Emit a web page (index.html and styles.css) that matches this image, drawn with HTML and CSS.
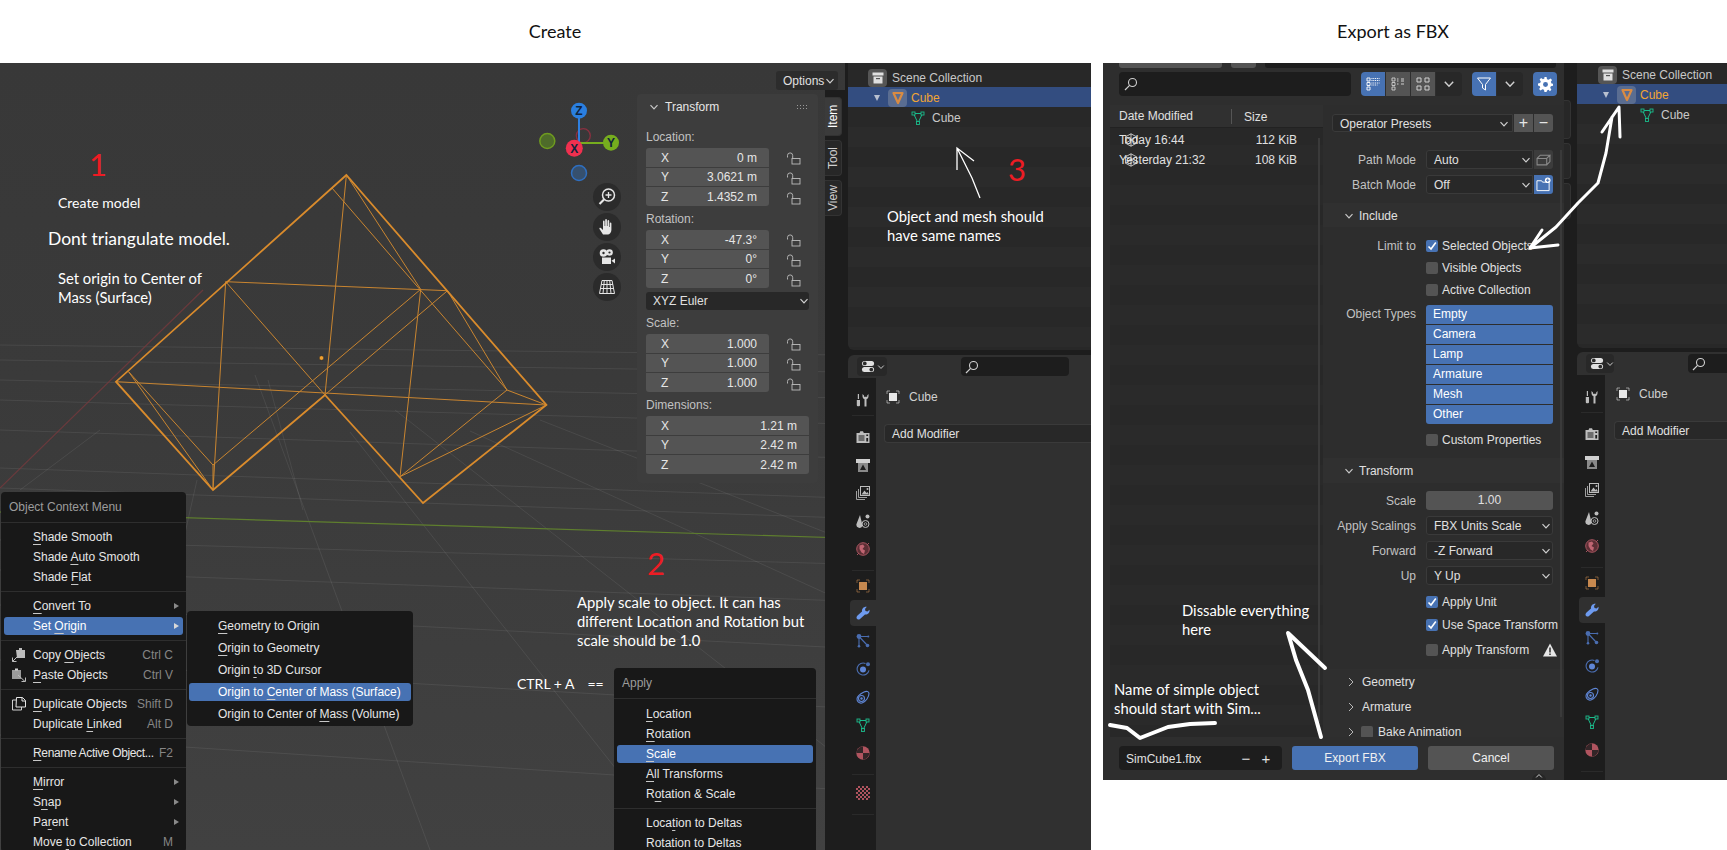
FILE: index.html
```html
<!DOCTYPE html>
<html lang="en">
<head>
  <meta charset="UTF-8" />
  <title>Create and Export as FBX</title>
  <link rel="stylesheet" href="styles.css">
</head>
<body>

  <!-- shared icons -->
  <svg class="defs" width="0" height="0">
    <defs>
      <pattern id="chk" width="4" height="4" patternUnits="userSpaceOnUse">
        <rect width="4" height="4" fill="#b0545f"/>
        <rect width="2" height="2" fill="#1d1d1d"/>
        <rect x="2" y="2" width="2" height="2" fill="#1d1d1d"/>
      </pattern>
    </defs>
    <symbol id="i-lock" viewBox="0 0 14 12">
      <path d="M.5 5V3a2.6 2.6 0 0 1 5.2 0v3" fill="none" stroke="#bdbdbd" stroke-width=".9"/>
      <rect x="5" y="6" width="8" height="5.5" fill="none" stroke="#bdbdbd" stroke-width=".9"/>
    </symbol>
    <symbol id="i-chev" viewBox="0 0 10 10">
      <path d="M1.5 3.2 5 6.8l3.5-3.6" fill="none" stroke="currentColor" stroke-width="1.2"/>
    </symbol>
    <symbol id="i-chev-r" viewBox="0 0 10 10">
      <path d="M3 1l4 4-4 4" fill="none" stroke="currentColor" stroke-width="1"/>
    </symbol>
    <symbol id="i-search" viewBox="0 0 14 14">
      <circle cx="8.5" cy="5.5" r="4" fill="none" stroke="#d0d0d0" stroke-width="1.1"/>
      <path d="M5.6 8.4 1 13" stroke="#d0d0d0" stroke-width="1.2"/>
    </symbol>
    <symbol id="i-mesh" viewBox="0 0 14 14">
      <path d="M2.5 2.5h9L7 12z" fill="none" stroke="#1abc8c" stroke-width="1"/>
      <g fill="#282828" stroke="#1abc8c" stroke-width=".9">
        <rect x="1" y="1" width="3" height="3"/><rect x="10" y="1" width="3" height="3"/><rect x="5.500" y="10.500" width="3" height="3"/>
      </g>
    </symbol>
    <symbol id="i-tri" viewBox="0 0 14 14">
      <path d="M2.500 2h9L7 12z" fill="none" stroke="#d98b42" stroke-width="2.200" stroke-linejoin="round"/>
    </symbol>
    <symbol id="i-box" viewBox="0 0 14 14">
      <path d="M1.500 1.500h11v3h-11zM2.500 5.500h9v7h-9z" fill="#e0e0e0"/>
      <rect x="5" y="7" width="4" height="1.200" fill="#555"/>
    </symbol>
    <symbol id="i-editor" viewBox="0 0 16 14">
      <rect x="1" y="1" width="13" height="5.500" rx="2.700" fill="#e0e0e0"/>
      <rect x="1" y="7.500" width="13" height="5.500" rx="2.700" fill="#e0e0e0"/>
      <circle cx="4" cy="3.700" r="2" fill="#2a2a2a"/><circle cx="11" cy="10.300" r="2" fill="#2a2a2a"/>
    </symbol>
    <symbol id="i-object" viewBox="0 0 14 14">
      <path d="M1 4V1h3M10 1h3v3M13 10v3h-3M4 13H1v-3" fill="none" stroke="currentColor" stroke-width=".8" opacity=".7"/>
      <rect x="3" y="3" width="8" height="8" fill="currentColor"/>
    </symbol>
    <symbol id="t-tool" viewBox="0 0 14 14">
      <path d="M1.800 1h1.200v5H1.800zM.8 7h3.200v5.200a1 1 0 0 1-1 1h-1.200a1 1 0 0 1-1-1z" fill="#bdbdbd"/>
      <path d="M6.500 1v2.500a3 3 0 0 0 2 2.800V13.500h2V6.300a3 3 0 0 0 2-2.800V1l-1.300 1.500v1.300H8V2.500z" fill="#bdbdbd"/>
    </symbol>
    <symbol id="t-render" viewBox="0 0 14 14">
      <path d="M.5 3h3l.8-1.700h2.700L7.800 3h5.700v10H.5z" fill="#bdbdbd"/>
      <path d="M2.500 6h6M2.500 8h6M2.500 10h6" stroke="#1d1d1d"/>
      <rect x="10.300" y="4.500" width="1.800" height="1.500" fill="#1d1d1d"/>
      <rect x="10.300" y="8" width="1.800" height="3.500" fill="#1d1d1d"/>
    </symbol>
    <symbol id="t-output" viewBox="0 0 14 14">
      <path d="M0 1h14v4H0z" fill="#d0d0d0"/>
      <path d="M2 5h10v9H2z" fill="#8a8a8a"/>
      <path d="M7 6.500 10 12H4z" fill="#1d1d1d"/>
    </symbol>
    <symbol id="t-layer" viewBox="0 0 14 14">
      <path d="M.5 5v8.500h8.500" fill="none" stroke="#a0a0a0"/>
      <path d="M2.500 3v8.500h8.500" fill="none" stroke="#a0a0a0"/>
      <rect x="4.500" y=".5" width="9" height="9" fill="#1d1d1d" stroke="#bdbdbd"/>
      <path d="M5.500 8.500l3-4 2 2.500 1-1 1.500 2.500z" fill="#bdbdbd"/><circle cx="11.500" cy="3" r="1" fill="#bdbdbd"/>
    </symbol>
    <symbol id="t-scene" viewBox="0 0 14 14">
      <path d="M4 1 .5 10a3 3 0 0 0 6 1.500z" fill="#bdbdbd"/>
      <circle cx="11.500" cy="2.500" r="2" fill="#bdbdbd"/>
      <circle cx="9.500" cy="10" r="3.500" fill="#1d1d1d" stroke="#bdbdbd"/>
      <circle cx="9.500" cy="10" r="1.300" fill="none" stroke="#bdbdbd" stroke-width=".7"/>
    </symbol>
    <symbol id="t-world" viewBox="0 0 14 14">
      <circle cx="7" cy="7" r="6.300" fill="#5c2f35" stroke="#a85560"/>
      <path d="M3.500 3.500 7 2.500l1.500 2L6.500 7 9 8.500 8 12 5.500 10.500 3.500 7z" fill="#c06572"/>
      <path d="M1 13 3 11M11 3l2-2" stroke="#a85560"/>
    </symbol>
    <symbol id="t-wrench" viewBox="0 0 14 14">
      <path d="M1.500 13.200c-1.500-1-1.200-2.700 0-3.800L6 5.500C5.600 3 7.500.5 10.800.8L9 3l.5 2 2 .5L13.500 3.800c.5 3-1.800 5-4.500 4.700L4 13c-.8.700-1.700.8-2.500.2z" fill="#6e9bf0"/>
    </symbol>
    <symbol id="t-part" viewBox="0 0 14 14">
      <path d="M3 2.500 12 2.500M3 2.500 11.500 11.500M3 2.500 3 12" stroke="#4a6db0" stroke-width="1.100"/>
      <circle cx="3" cy="2.500" r="2.400" fill="#4a6db0"/><circle cx="11.500" cy="11.500" r="1.800" fill="#4a6db0"/><circle cx="3" cy="12.300" r="1.300" fill="#4a6db0"/><circle cx="12.300" cy="2.500" r="1" fill="#4a6db0"/>
    </symbol>
    <symbol id="t-phys" viewBox="0 0 14 14">
      <path d="M9.500 1.500a6 6 0 1 0 3.500 6.800" fill="none" stroke="#4a6db0" stroke-width="1.100"/>
      <circle cx="7" cy="7.500" r="3" fill="#5f86d6"/><circle cx="12" cy="2.300" r="2" fill="#4a6db0"/>
    </symbol>
    <symbol id="t-constr" viewBox="0 0 14 14">
      <path d="M1 9c0-2.500 4-5.500 7-7 2.500-1.300 5-.5 5 1.500 0 3-3 8.500-7 9.500-3 .7-5-1.500-5-4z" fill="none" stroke="#5f86d6" stroke-width="1.100"/>
      <circle cx="5.500" cy="8.500" r="3" fill="none" stroke="#5f86d6" stroke-width="1.100"/>
      <circle cx="5.500" cy="8.500" r="1.200" fill="#5f86d6"/>
    </symbol>
    <symbol id="t-mat" viewBox="0 0 14 14">
      <circle cx="7" cy="7" r="6.700" fill="#b0545f"/>
      <path d="M7 .5V7H.5A6.500 6.500 0 0 1 7 .5zM7 7h6.500A6.500 6.500 0 0 1 7 13.500z" fill="#1d1d1d" opacity=".85"/>
    </symbol>
    <symbol id="t-tex" viewBox="0 0 14 14">
      <rect width="14" height="14" fill="url(#chk)"/>
    </symbol>
    <symbol id="i-wirecube" viewBox="0 0 14 14">
      <path d="M7 .8 12.500 3.800V10.200L7 13.200 1.500 10.200V3.800zM1.500 3.800 7 7 12.500 3.800M7 .8V13.200M1.500 10.200 7 7 12.500 10.200" fill="none" stroke="#e6e6e6" stroke-width=".8"/>
    </symbol>
    <symbol id="i-check" viewBox="0 0 12 12">
      <path d="M2.500 6.500 5 9l4.800-6.500" fill="none" stroke="#fff" stroke-width="1.600"/>
    </symbol>
  </svg>

  <div class="titles">
    <div class="title title-left">Create</div>
    <div class="title title-right">Export as FBX</div>
  </div>

  <div class="panels">

    <!-- left screenshot -->
    <section class="panel-left">
      <div class="viewport">
        <svg class="floor" viewBox="0 63 845 787">
          <g stroke="#fff" stroke-opacity=".075" stroke-width="1" fill="none">
            <path d="M0 345 845 355M0 360 845 372M0 380 845 398M0 400 845 424M0 430 845 458M0 468 845 498M0 488 845 518M0 540 845 564M0 570 845 601M0 605 845 648M0 660 845 708M0 735 845 790"/>
            <path d="M395 410 845 762M350 432 680 850M255 375 430 850M470 431 845 602M197 480 170 600M268 380 303 510M540 420 845 540M100 430 20 490"/>
          </g>
          <path d="M0 488 203 290" stroke="#7a3a3e" stroke-opacity=".75" stroke-width="1.200"/>
          <path d="M0 512 845 538" stroke="#5f7f2e" stroke-width="1.200"/>

          <!-- wire of the model -->
          <g stroke="#c98530" stroke-width="1" fill="none">
            <path d="M225.700 281.700 447.500 290.700M116 381.700 546.400 405M346.400 175 325 395M225.700 281.700 213 490M420.700 289.300 400 476.700"/>
            <path d="M225.700 281.700 325 395M447.500 290.700 213 490M420.700 289.300 213 465M332 188 507 390M346.400 175 420.700 289.300"/>
            <path d="M447.500 290.700 507 390 546.400 405M507 390 400 476.700 546.400 405M128.600 371.700 213 465M128.600 371.700 213 490M213 465 213 490"/>
          </g>
          <path d="M346.400 175 116 381.700 213 490 325 395 423 503 546.400 405z" fill="none" stroke="#d98b2c" stroke-width="1.800"/>
          <circle cx="321.500" cy="358" r="2.300" fill="#f0a030" stroke="#222" stroke-width=".5"/>

          <!-- axis gizmo -->
          <circle cx="547.300" cy="141" r="7.500" fill="#4e6b2a" stroke="#6f9b1f" stroke-width="1.500"/>
          <circle cx="579" cy="173" r="7.500" fill="#36506e" stroke="#2f6fc0" stroke-width="1.500"/>
          <circle cx="583.300" cy="135.700" r="7" fill="none" stroke="#8a3040" stroke-width="1.300"/>
          <path d="M579 111V148" stroke="#2f80e0" stroke-width="2"/>
          <path d="M575 143H611" stroke="#76ad1e" stroke-width="2"/>
          <circle cx="579" cy="110.700" r="8" fill="#2a7fe0"/>
          <circle cx="611" cy="142.700" r="8" fill="#76ad1e"/>
          <circle cx="574.300" cy="148.300" r="8.500" fill="#f0304f"/>
          <g class="axis-text">
            <text x="579" y="115">Z</text>
            <text x="611" y="147">Y</text>
            <text x="574.300" y="152.500">X</text>
          </g>
        </svg>

        <div class="options-btn">Options <svg class="chev"><use href="#i-chev"/></svg></div>

        <div class="nav-btns">
          <div class="nav-btn">
            <svg viewBox="0 0 18 18"><circle cx="10.500" cy="7" r="6" fill="none" stroke="#e6e6e6" stroke-width="1.500"/><path d="M6 11.500 1.500 16" stroke="#e6e6e6" stroke-width="2.200"/><path d="M7.500 7h6M10.500 4v6" stroke="#e6e6e6" stroke-width="1.300"/></svg>
          </div>
          <div class="nav-btn">
            <svg viewBox="0 0 18 18"><path d="M5 16.500 1.500 11c-.6-1 .6-1.800 1.400-1L5 12V3.500c0-1.300 1.600-1.300 1.600 0V8h.6V2c0-1.300 1.700-1.300 1.700 0V8h.6V3c0-1.300 1.700-1.300 1.700 0V9h.6V5.500c0-1.300 1.600-1.300 1.600 0V12c0 2.500-2 4.500-3.500 4.500z" fill="#e6e6e6"/></svg>
          </div>
          <div class="nav-btn">
            <svg viewBox="0 0 18 18"><circle cx="5.500" cy="5" r="3.800" fill="#e6e6e6"/><circle cx="11.500" cy="4.500" r="3.300" fill="#e6e6e6"/><circle cx="5.500" cy="5" r="1.200" fill="#2a2a2a"/><circle cx="11.500" cy="4.500" r="1.100" fill="#2a2a2a"/><rect x="4" y="9.500" width="9" height="6.500" fill="#e6e6e6"/><path d="M13.500 12.700 17 10.500v5z" fill="#e6e6e6"/></svg>
          </div>
          <div class="nav-btn">
            <svg viewBox="0 0 18 18"><path d="M4 2.500h10l2.500 13h-15zM9 2.500v13M6.300 2.500 5 15.500M11.700 2.500 13 15.500M3.200 6.500h11.600M2.500 10.500h13" fill="none" stroke="#e6e6e6" stroke-width="1"/></svg>
          </div>
        </div>

        <div class="tab-column">
          <div class="side-tab side-tab-on">Item</div>
          <div class="side-tab">Tool</div>
          <div class="side-tab">View</div>
        </div>

        <div class="n-panel">
          <div class="n-head">
            <svg class="n-chev"><use href="#i-chev"/></svg>
            <span>Transform</span>
            <span class="grip"></span>
          </div>

          <div class="n-label n-first">Location:</div>
          <div class="lock-row">
            <div class="num-stack">
              <div class="num"><span>X</span><span>0 m</span></div>
              <div class="num"><span>Y</span><span>3.0621 m</span></div>
              <div class="num"><span>Z</span><span>1.4352 m</span></div>
            </div>
            <div class="locks"><svg><use href="#i-lock"/></svg><svg><use href="#i-lock"/></svg><svg><use href="#i-lock"/></svg></div>
          </div>

          <div class="n-label">Rotation:</div>
          <div class="lock-row">
            <div class="num-stack">
              <div class="num"><span>X</span><span>-47.3°</span></div>
              <div class="num"><span>Y</span><span>0°</span></div>
              <div class="num"><span>Z</span><span>0°</span></div>
            </div>
            <div class="locks"><svg><use href="#i-lock"/></svg><svg><use href="#i-lock"/></svg><svg><use href="#i-lock"/></svg></div>
          </div>

          <div class="euler">XYZ Euler <svg class="chev"><use href="#i-chev"/></svg></div>

          <div class="n-label">Scale:</div>
          <div class="lock-row">
            <div class="num-stack">
              <div class="num"><span>X</span><span>1.000</span></div>
              <div class="num"><span>Y</span><span>1.000</span></div>
              <div class="num"><span>Z</span><span>1.000</span></div>
            </div>
            <div class="locks"><svg><use href="#i-lock"/></svg><svg><use href="#i-lock"/></svg><svg><use href="#i-lock"/></svg></div>
          </div>

          <div class="n-label">Dimensions:</div>
          <div class="num-stack">
            <div class="num"><span>X</span><span>1.21 m</span></div>
            <div class="num"><span>Y</span><span>2.42 m</span></div>
            <div class="num"><span>Z</span><span>2.42 m</span></div>
          </div>
        </div>

        <!-- right click menus -->
        <div class="menu menu-object">
          <div class="menu-title">Object Context Menu</div>
          <div class="menu-list">
            <div class="item"><span><u>S</u>hade Smooth</span></div>
            <div class="item"><span>Shade <u>A</u>uto Smooth</span></div>
            <div class="item"><span>Shade <u>F</u>lat</span></div>
            <div class="sep"></div>
            <div class="item"><span><u>C</u>onvert To</span><i class="arrow"></i></div>
            <div class="item hot"><span>Set <u>O</u>rigin</span><i class="arrow"></i></div>
            <div class="sep"></div>
            <div class="item">
              <svg class="item-ico" viewBox="0 0 14 14"><path d="M4 2h9v8H5z" fill="#bdbdbd"/><path d="M7 0h3v2H7z" fill="#bdbdbd"/><path d="M.5 13.500 5 9M.5 9.500v4h4" fill="none" stroke="#bdbdbd"/></svg>
              <span>Copy <u>O</u>bjects</span><span class="key">Ctrl C</span>
            </div>
            <div class="item">
              <svg class="item-ico" viewBox="0 0 14 14"><path d="M0 2h9v9H0z" fill="#9a9a9a"/><path d="M3 .5h3v2H3z" fill="#d0d0d0"/><path d="M6 7l7 6.500M13.500 9.500v4h-4" fill="none" stroke="#bdbdbd"/></svg>
              <span><u>P</u>aste Objects</span><span class="key">Ctrl V</span>
            </div>
            <div class="sep"></div>
            <div class="item">
              <svg class="item-ico" viewBox="0 0 14 14"><path d="M4 3H.5v10h9v-3" fill="none" stroke="#d0d0d0"/><path d="M4.500.5h6l3 3v6.500h-9.500zM10 .5v3.500h3.500" fill="none" stroke="#e6e6e6"/></svg>
              <span><u>D</u>uplicate Objects</span><span class="key">Shift D</span>
            </div>
            <div class="item"><span>Duplicate <u>L</u>inked</span><span class="key">Alt D</span></div>
            <div class="sep"></div>
            <div class="item"><span class="tight"><u>R</u>ename Active Object...</span><span class="key">F2</span></div>
            <div class="sep"></div>
            <div class="item"><span><u>M</u>irror</span><i class="arrow"></i></div>
            <div class="item"><span>S<u>n</u>ap</span><i class="arrow"></i></div>
            <div class="item"><span>Pa<u>r</u>ent</span><i class="arrow"></i></div>
            <div class="item"><span>Move <u>t</u>o Collection</span><span class="key">M</span></div>
          </div>
        </div>

        <div class="menu menu-sub">
          <div class="menu-list">
            <div class="item"><span><u>G</u>eometry to Origin</span></div>
            <div class="item"><span><u>O</u>rigin to Geometry</span></div>
            <div class="item"><span>Origin <u>t</u>o 3D Cursor</span></div>
            <div class="item hot"><span>Origin to <u>C</u>enter of Mass (Surface)</span></div>
            <div class="item"><span>Origin to Center of <u>M</u>ass (Volume)</span></div>
          </div>
        </div>

        <div class="menu menu-apply">
          <div class="menu-title">Apply</div>
          <div class="menu-list">
            <div class="item"><span><u>L</u>ocation</span></div>
            <div class="item"><span><u>R</u>otation</span></div>
            <div class="item hot"><span><u>S</u>cale</span></div>
            <div class="item"><span><u>A</u>ll Transforms</span></div>
            <div class="item"><span>R<u>o</u>tation &amp; Scale</span></div>
            <div class="sep"></div>
            <div class="item"><span>Loca<u>t</u>ion to Deltas</span></div>
            <div class="item"><span>Rotat<u>i</u>on to Deltas</span></div>
          </div>
        </div>
      </div>

      <div class="side-col">
        <div class="outliner">
          <div class="ol-row ol-scene"><span class="ol-ico"><svg><use href="#i-box"/></svg></span>Scene Collection</div>
          <div class="ol-row ol-object"><i class="twist"></i><span class="ol-ico ol-ico-obj"><svg><use href="#i-tri"/></svg></span>Cube</div>
          <div class="ol-row ol-mesh"><svg class="mesh-ico"><use href="#i-mesh"/></svg>Cube</div>
        </div>
        <div class="props">
          <div class="props-head">
            <div class="editor-btn"><svg><use href="#i-editor"/></svg><svg class="chev"><use href="#i-chev"/></svg></div>
            <div class="search-box"><svg><use href="#i-search"/></svg></div>
          </div>
          <div class="props-body">
            <div class="tabs">
              <svg class="tab-ico tab-first"><use href="#t-tool"/></svg>
              <div class="tab-sep"></div>
              <svg class="tab-ico"><use href="#t-render"/></svg>
              <svg class="tab-ico"><use href="#t-output"/></svg>
              <svg class="tab-ico"><use href="#t-layer"/></svg>
              <svg class="tab-ico"><use href="#t-scene"/></svg>
              <svg class="tab-ico"><use href="#t-world"/></svg>
              <div class="tab-sep"></div>
              <svg class="tab-ico tab-orange"><use href="#i-object"/></svg>
              <div class="tab-on"><svg class="tab-ico"><use href="#t-wrench"/></svg></div>
              <svg class="tab-ico"><use href="#t-part"/></svg>
              <svg class="tab-ico"><use href="#t-phys"/></svg>
              <svg class="tab-ico"><use href="#t-constr"/></svg>
              <svg class="tab-ico"><use href="#i-mesh"/></svg>
              <svg class="tab-ico"><use href="#t-mat"/></svg>
              <div class="tab-sep"></div>
              <svg class="tab-ico"><use href="#t-tex"/></svg>
              <div class="tab-sep"></div>
            </div>
            <div class="props-main">
              <div class="props-obj"><svg><use href="#i-object"/></svg>Cube</div>
              <div class="add-mod">Add Modifier</div>
            </div>
          </div>
        </div>
      </div>

      <svg class="overlay" viewBox="0 63 1091 787">
        <path d="M980 198 972 178 957 148M957 170V148L974 161" fill="none" stroke="#fff" stroke-width="1.300"/>
      </svg>

      <div class="num-note note-1">1</div>
      <div class="note note-create">Create model</div>
      <div class="note note-big note-tri">Dont triangulate model.</div>
      <div class="note note-wide note-origin">Set origin to Center of<br>Mass (Surface)</div>
      <div class="num-note note-2">2</div>
      <div class="note note-wide note-scale">Apply scale to object. It can has<br>different Location and Rotation but<br>scale should be 1.0</div>
      <div class="note note-ctrl"><span>CTRL + A</span><span>==</span></div>
      <div class="num-note note-3">3</div>
      <div class="note note-wide note-names">Object and mesh should<br>have same names</div>
    </section>

    <!-- right screenshot -->
    <section class="panel-right">
      <div class="browser">
        <div class="fb-strip"><span class="strip-a"></span><span class="strip-b"></span><span class="strip-c"></span></div>
        <div class="fb-tools">
          <div class="search-box fb-search"><svg><use href="#i-search"/></svg></div>
          <div class="btn-group">
            <div class="tbtn tbtn-on"><svg viewBox="0 0 14 14"><path d="M1 1h3v3H1zM1 5.500h3v3H1zM1 10h3v3H1z" fill="none" stroke="#fff" stroke-width=".9"/><path d="M5.500 1.500h8M5.500 3.500h8M5.500 6h8M5.500 8h6" stroke="#fff" stroke-dasharray="1 .8"/></svg></div>
            <div class="tbtn tbtn-gray"><svg viewBox="0 0 14 14"><path d="M1 1h3v3H1zM1 5.500h3v3H1zM1 10h3v3H1z" fill="none" stroke="#d0d0d0" stroke-width=".9"/><path d="M6 2h1.500M6 4h1.500M10 2h3M10 4h3M6 7h1.500M10 7h3" stroke="#d0d0d0"/></svg></div>
            <div class="tbtn tbtn-gray"><svg viewBox="0 0 14 14"><path d="M1 1h4v4H1zM9 1h4v4H9zM1 9h4v4H1zM9 9h4v4H9z" fill="none" stroke="#d0d0d0"/></svg></div>
            <div class="tbtn tbtn-drop"><svg class="chev"><use href="#i-chev"/></svg></div>
          </div>
          <div class="btn-group">
            <div class="tbtn tbtn-on"><svg viewBox="0 0 14 14"><path d="M.5 1h13L8.500 7.500V13L5.500 11V7.500z" fill="none" stroke="#fff"/></svg></div>
            <div class="tbtn tbtn-drop"><svg class="chev"><use href="#i-chev"/></svg></div>
          </div>
          <div class="tbtn tbtn-on tbtn-solo"><svg viewBox="0 0 14 14"><path d="M6 0h2l.4 2 1.500.6L11.700 1.500l1.400 1.400L12 4.500l.6 1.500 1.400.2v2l-2 .4-.6 1.500 1.100 1.700-1.400 1.400L9.900 12l-1.500.6L8 14H6l-.4-2-1.500-.6-1.700 1.100-1.400-1.400L2.100 9.900 1.500 8.400 0 8V6l2-.4.6-1.500L1.500 2.400l1.400-1.400L4.600 2.100 6 1.500z" fill="#fff"/><circle cx="7" cy="7" r="2.300" fill="#4772b3"/></svg></div>
        </div>

        <div class="fb-main">
          <div class="file-list">
            <div class="file-head"><span class="col-date">Date Modified</span><span class="col-size">Size</span></div>
            <div class="file-row"><svg class="file-ico"><use href="#i-wirecube"/></svg><span>Today 16:44</span><span class="file-size">112 KiB</span></div>
            <div class="file-row"><svg class="file-ico"><use href="#i-wirecube"/></svg><span>Yesterday 21:32</span><span class="file-size">108 KiB</span></div>
            <div class="list-scroll"></div>
          </div>

          <div class="fb-options">
            <div class="preset-row">
              <div class="preset">Operator Presets <svg class="chev"><use href="#i-chev"/></svg></div>
              <div class="pm">+</div>
              <div class="pm">−</div>
            </div>

            <div class="opt opt-path">
              <div class="opt-label">Path Mode</div>
              <div class="drop-wrap">
                <div class="drop drop-join">Auto <svg class="chev"><use href="#i-chev"/></svg></div>
                <div class="drop-btn"><svg viewBox="0 0 14 14"><path d="M1 6h9v6H1zM1 6l3-3h9l-3 3M13 3v6l-3 3" fill="none" stroke="#8a8a8a"/></svg></div>
              </div>
            </div>
            <div class="opt">
              <div class="opt-label">Batch Mode</div>
              <div class="drop-wrap">
                <div class="drop drop-join">Off <svg class="chev"><use href="#i-chev"/></svg></div>
                <div class="drop-btn drop-btn-on"><svg viewBox="0 0 16 16"><path d="M1 4h5l1 1.500h7v9H1z" fill="none" stroke="#fff"/><circle cx="12.500" cy="3.500" r="3" fill="#fff"/><path d="M12.500 1.700v3.600M10.700 3.500h3.600" stroke="#4772b3"/></svg></div>
              </div>
            </div>

            <div class="sub-head sub-include"><svg class="n-chev"><use href="#i-chev"/></svg>Include</div>

            <div class="chk-row chk-limit"><div class="opt-label">Limit to</div><span class="box box-on"><svg><use href="#i-check"/></svg></span>Selected Objects</div>
            <div class="chk-row"><div class="opt-label"></div><span class="box"></span>Visible Objects</div>
            <div class="chk-row"><div class="opt-label"></div><span class="box"></span>Active Collection</div>

            <div class="opt opt-types">
              <div class="opt-label">Object Types</div>
              <div class="type-stack">
                <div class="type">Empty</div>
                <div class="type">Camera</div>
                <div class="type">Lamp</div>
                <div class="type">Armature</div>
                <div class="type">Mesh</div>
                <div class="type">Other</div>
              </div>
            </div>
            <div class="chk-row chk-custom"><div class="opt-label"></div><span class="box"></span>Custom Properties</div>

            <div class="sub-head sub-transform"><svg class="n-chev"><use href="#i-chev"/></svg>Transform</div>
            <div class="opt opt-scale">
              <div class="opt-label">Scale</div>
              <div class="scale-val">1.00</div>
            </div>
            <div class="opt"><div class="opt-label">Apply Scalings</div><div class="drop">FBX Units Scale <svg class="chev"><use href="#i-chev"/></svg></div></div>
            <div class="opt"><div class="opt-label">Forward</div><div class="drop">-Z Forward <svg class="chev"><use href="#i-chev"/></svg></div></div>
            <div class="opt"><div class="opt-label">Up</div><div class="drop">Y Up <svg class="chev"><use href="#i-chev"/></svg></div></div>
            <div class="chk-row chk-unit"><div class="opt-label"></div><span class="box box-on"><svg><use href="#i-check"/></svg></span>Apply Unit</div>
            <div class="chk-row chk-wide"><div class="opt-label"></div><span class="box box-on"><svg><use href="#i-check"/></svg></span>Use Space Transform</div>
            <div class="chk-row chk-wide"><div class="opt-label"></div><span class="box"></span>Apply Transform
              <svg class="warn" viewBox="0 0 14 14"><path d="M7 .5 14 13.500H0z" fill="#e6e6e6"/><path d="M7 4.500v5M7 10.500v1.500" stroke="#2d2d2d" stroke-width="1.500"/></svg>
            </div>

            <div class="sub-head sub-closed"><svg class="r-chev"><use href="#i-chev-r"/></svg>Geometry</div>
            <div class="sub-head sub-closed"><svg class="r-chev"><use href="#i-chev-r"/></svg>Armature</div>
            <div class="sub-head sub-closed"><svg class="r-chev"><use href="#i-chev-r"/></svg><span class="box box-bake"></span>Bake Animation</div>
            <div class="opt-scroll"></div>
          </div>
        </div>

        <div class="fb-bottom">
          <div class="file-name"><span>SimCube1.fbx</span><span class="fn-pm">−</span><span class="fn-pm">+</span></div>
          <div class="act act-go">Export FBX</div>
          <div class="act act-no">Cancel</div>
          <div class="bump"><svg class="chev"><use href="#i-chev"/></svg></div>
        </div>
      </div>

      <div class="gutter">
        <i class="stub stub-a"></i><i class="stub stub-b"></i><i class="stub stub-c"></i>
      </div>

      <div class="side-col side-col-r">
        <div class="outliner outliner-r">
          <div class="ol-row ol-scene"><span class="ol-ico"><svg><use href="#i-box"/></svg></span>Scene Collection</div>
          <div class="ol-row ol-object"><i class="twist"></i><span class="ol-ico ol-ico-obj"><svg><use href="#i-tri"/></svg></span>Cube</div>
          <div class="ol-row ol-mesh"><svg class="mesh-ico"><use href="#i-mesh"/></svg>Cube</div>
        </div>
        <div class="props">
          <div class="props-head">
            <div class="editor-btn"><svg><use href="#i-editor"/></svg><svg class="chev"><use href="#i-chev"/></svg></div>
            <div class="search-box"><svg><use href="#i-search"/></svg></div>
          </div>
          <div class="props-body">
            <div class="tabs">
              <svg class="tab-ico tab-first"><use href="#t-tool"/></svg>
              <div class="tab-sep"></div>
              <svg class="tab-ico"><use href="#t-render"/></svg>
              <svg class="tab-ico"><use href="#t-output"/></svg>
              <svg class="tab-ico"><use href="#t-layer"/></svg>
              <svg class="tab-ico"><use href="#t-scene"/></svg>
              <svg class="tab-ico"><use href="#t-world"/></svg>
              <div class="tab-sep"></div>
              <svg class="tab-ico tab-orange"><use href="#i-object"/></svg>
              <div class="tab-on"><svg class="tab-ico"><use href="#t-wrench"/></svg></div>
              <svg class="tab-ico"><use href="#t-part"/></svg>
              <svg class="tab-ico"><use href="#t-phys"/></svg>
              <svg class="tab-ico"><use href="#t-constr"/></svg>
              <svg class="tab-ico"><use href="#i-mesh"/></svg>
              <svg class="tab-ico"><use href="#t-mat"/></svg>
              <div class="tab-sep"></div>
              <svg class="tab-ico"><use href="#t-tex"/></svg>
            </div>
            <div class="props-main">
              <div class="props-obj"><svg><use href="#i-object"/></svg>Cube</div>
              <div class="add-mod">Add Modifier</div>
            </div>
          </div>
        </div>
      </div>

      <svg class="overlay" viewBox="1103 63 624 717">
        <g fill="none" stroke="#fff" stroke-linejoin="round" stroke-linecap="round">
          <path d="M1602 132 1619 107 1620 137M1612 117 1606 153 1598 183 1578 203 1556 227 1530 248M1542 230 1530 248 1558 245" stroke-width="3"/>
          <path d="M1321 737 1308 690 1296 660 1288 633 1325 668" stroke-width="4"/>
          <path d="M1110 725 1127 728 1140 738 1168 727 1190 724 1215 723" stroke-width="4"/>
        </g>
      </svg>

      <div class="note note-wide note-dissable">Dissable everything<br>here</div>
      <div class="note note-wide note-sim">Name of simple object<br>should start with Sim...</div>
    </section>
  </div>

</body>
</html>
```
FILE: styles.css
```css
* { box-sizing: border-box; }

body {
  margin: 0;
  width: 1727px;
  height: 850px;
  overflow: hidden;
  background: white;
  font-family: "Liberation Sans", sans-serif;
  font-size: 12px;
  color: #e0e0e0;
}

.defs { position: absolute; }
svg { display: block; }

u {
  text-decoration-color: #c8c8c8;
  text-decoration-thickness: 1px;
  text-underline-offset: 3px;
}

.chev { width: 10px; height: 10px; flex: none; color: #d0d0d0; }

/* titles */
.titles {
  display: flex;
  height: 63px;
  align-items: center;
  font-family: Lato, sans-serif;
  font-size: 18px;
  color: #111;
  padding-bottom: 1px;
}

.title { text-align: center; }
.title-left { width: 1110px; }
.title-right { width: 566px; }

.panels { display: flex; }

/* left screenshot */
.panel-left {
  position: relative;
  display: flex;
  width: 1091px;
  height: 787px;
  margin-right: 12px;
  background: #1d1d1d;
}

.viewport {
  position: relative;
  width: 845px;
  margin-right: 3px;
  overflow: hidden;
  background: linear-gradient(#383838, #3a3a3a 40%, #414141);
}

.floor {
  position: absolute;
  inset: 0;
  width: 845px;
  height: 787px;
}

.axis-text text {
  font-family: "Liberation Sans", sans-serif;
  font-size: 12px;
  font-weight: 700;
  text-anchor: middle;
  fill: #10233c;
}

.options-btn {
  position: absolute;
  left: 776px;
  top: 8px;
  width: 62px;
  height: 19px;
  display: flex;
  align-items: center;
  justify-content: space-between;
  padding: 0 3px 0 7px;
  background: #2c2c2c;
  border-radius: 3px;
}

.nav-btns {
  position: absolute;
  left: 593px;
  top: 120px;
  display: flex;
  flex-direction: column;
  gap: 2px;
}

.nav-btn {
  width: 28px;
  height: 28px;
  border-radius: 50%;
  background: #2b2b2b;
  display: flex;
  align-items: center;
  justify-content: center;
}

.nav-btn svg { width: 18px; height: 18px; }

.tab-column {
  position: absolute;
  left: 825px;
  top: 27px;
  bottom: 0;
  width: 20px;
  background: #1d1d1d;
  padding-top: 7px;
  display: flex;
  flex-direction: column;
  gap: 4px;
}

.side-tab {
  writing-mode: vertical-rl;
  transform: rotate(180deg);
  width: 17px;
  height: 36px;
  display: flex;
  align-items: center;
  justify-content: center;
  background: #272727;
  border: 1px solid #333;
  border-right: 0;
  border-radius: 4px 0 0 4px;
  color: #cfcfcf;
}

.side-tab-on { height: 39px; background: #3b3b3b; color: #fff; }

.n-panel {
  position: absolute;
  left: 637px;
  top: 31px;
  width: 181px;
  height: 389px;
  padding: 0 9px;
  background: #3d3d3d;
  border-radius: 4px;
}

.n-head {
  display: flex;
  align-items: center;
  height: 26px;
  padding-left: 3px;
  gap: 6px;
  color: #e6e6e6;
}

.n-chev { width: 10px; height: 10px; flex: none; color: #c8c8c8; }

.grip {
  margin-left: auto;
  width: 11px;
  height: 6px;
  margin-right: 2px;
  background-image: radial-gradient(#9a9a9a 0.7px, transparent 0.8px);
  background-size: 3px 3px;
}

.n-label {
  height: 18px;
  line-height: 19px;
  margin-top: 4px;
  margin-bottom: 2px;
  color: #c2c2c2;
}

.n-first { margin-top: 8px; }

.lock-row { display: flex; }
.lock-row .num-stack { width: 123px; }

.locks {
  display: flex;
  flex-direction: column;
  gap: 7px;
  padding: 4px 0 0 18px;
}

.locks svg { width: 14px; height: 13px; }

.num-stack {
  display: flex;
  flex-direction: column;
  gap: 1px;
}

.num {
  height: 18.67px;
  display: flex;
  align-items: center;
  justify-content: space-between;
  padding: 1px 12px 0 15px;
  background: #545454;
  color: #e6e6e6;
}

.num:first-child { border-radius: 3px 3px 0 0; }
.num:last-child { border-radius: 0 0 3px 3px; }

.euler {
  display: flex;
  align-items: center;
  justify-content: space-between;
  height: 18px;
  margin-top: 4px;
  padding: 0 0 0 7px;
  background: #282828;
  border-radius: 3px;
}

/* menus */
.menu {
  position: absolute;
  background: #181818;
  border-radius: 4px;
  color: #e6e6e6;
}

.menu-object { left: 1px; top: 429px; width: 185px; }
.menu-sub { left: 187px; top: 548px; width: 226px; padding-bottom: 1px; }
.menu-apply { left: 614px; top: 605px; width: 202px; }

.menu-title {
  height: 31px;
  line-height: 30px;
  padding-left: 8px;
  color: #9c9c9c;
  border-bottom: 1px solid #2e2e2e;
}

.menu-list {
  display: flex;
  flex-direction: column;
  padding-top: 4px;
}

.menu-sub .menu-list { padding-top: 4px; }
.menu-apply .menu-list { padding-top: 5px; }

.item {
  display: flex;
  align-items: center;
  flex: none;
  height: 18px;
  margin: 1px 3px;
  padding: 0 10px 0 29px;
  border-radius: 3px;
  white-space: nowrap;
}

.menu-sub .item { margin: 2px; }

.tight { letter-spacing: -.35px; }

.hot { background: #4772b3; color: #fff; }

.key { margin-left: auto; color: #868686; }

.arrow {
  margin-left: auto;
  margin-right: -6px;
  border-left: 5px solid #8a8a8a;
  border-top: 3.5px solid transparent;
  border-bottom: 3.5px solid transparent;
}

.hot .arrow { border-left-color: #d8d8d8; }

.item-ico {
  width: 14px;
  height: 14px;
  flex: none;
  margin: 0 7px 0 -21px;
}

.sep {
  height: 1px;
  flex: none;
  margin: 4px 0;
  background: #2e2e2e;
}

/* outliner + properties */
.side-col {
  flex: 1;
  display: flex;
  flex-direction: column;
  gap: 5px;
  min-width: 0;
}

.outliner {
  flex: none;
  height: 287px;
  padding-top: 4px;
  border-radius: 0 0 0 6px;
  background: repeating-linear-gradient(#282828 0 20px, #2b2b2b 20px 40px);
  background-position: 0 4px;
  color: #c8c8c8;
  overflow: hidden;
}

.ol-row {
  display: flex;
  align-items: center;
  height: 20px;
  padding-top: 2px;
  white-space: nowrap;
}

.ol-ico {
  width: 19px;
  height: 18px;
  flex: none;
  background: #555;
  border-radius: 4px;
  display: flex;
  align-items: center;
  justify-content: center;
}

.ol-ico svg { width: 14px; height: 14px; }

.ol-scene { padding-left: 20px; gap: 5px; }

.ol-object {
  padding-left: 26px;
  background: #334d80;
  color: #f0a534;
  gap: 4px;
}

.ol-ico-obj { background: #5a6d91; }

.twist {
  width: 0;
  margin-right: 4px;
  border-top: 6px solid #b8c0cf;
  border-left: 3.5px solid transparent;
  border-right: 3.5px solid transparent;
}

.ol-mesh { padding-left: 63px; gap: 7px; }
.mesh-ico { width: 14px; height: 14px; }

.props {
  flex: 1;
  min-height: 0;
  overflow: hidden;
  display: flex;
  flex-direction: column;
  background: #303030;
  border-radius: 6px 0 0 0;
}

.props-head {
  display: flex;
  flex: none;
  height: 23px;
  padding: 2px 0 0 9px;
}

.editor-btn {
  width: 30px;
  height: 19px;
  display: flex;
  align-items: center;
  padding-left: 4px;
  background: #282828;
  border-radius: 4px;
}

.editor-btn svg:first-child { width: 15px; height: 13px; flex: none; }
.editor-btn .chev { width: 8px; height: 8px; margin-left: 1px; }

.search-box {
  margin-left: 74px;
  width: 108px;
  flex: none;
  height: 19px;
  padding: 3px 0 0 4px;
  background: #1d1d1d;
  border-radius: 4px;
}

.search-box svg { width: 14px; height: 14px; }

.props-body { flex: 1; display: flex; min-height: 0; }

.tabs {
  width: 28px;
  flex: none;
  padding: 15px 0 0 2px;
  background: #1d1d1d;
  display: flex;
  flex-direction: column;
  align-items: center;
  overflow: hidden;
}

.tab-ico { width: 14px; height: 14px; flex: none; margin-bottom: 14px; margin-left: -1px; }
.tab-first { margin-bottom: 8px; }
.tab-first + .tab-sep { margin-bottom: 14px; }
.tab-orange { color: #c8894f; margin-top: -3px; margin-bottom: 7px; }

.tab-sep {
  width: 22px;
  height: 1px;
  flex: none;
  margin-bottom: 11px;
  background: #2a2a2a;
}

.tab-on {
  width: 26px;
  height: 26px;
  flex: none;
  margin-bottom: 8px;
  padding: 6px 0 0 6px;
  background: #303030;
  border-radius: 4px 0 0 4px;
  align-self: flex-end;
}

.tab-on .tab-ico { margin: 0; }

.props-main { flex: 1; padding: 11px 0 0 8px; min-width: 0; }

.props-obj {
  display: flex;
  align-items: center;
  gap: 9px;
  height: 16px;
  padding-left: 2px;
  color: #d0d0d0;
}

.props-obj svg { width: 14px; height: 14px; color: #e8e8e8; }

.add-mod {
  margin-top: 19px;
  height: 19px;
  line-height: 18px;
  padding-left: 7px;
  background: #282828;
  border: 1px solid #3a3a3a;
  border-right: 0;
  border-radius: 4px 0 0 4px;
  white-space: nowrap;
}

/* notes drawn over the screenshots */
.overlay {
  position: absolute;
  inset: 0;
  width: 100%;
  height: 100%;
  pointer-events: none;
}

.note {
  position: absolute;
  font-family: Lato, sans-serif;
  font-size: 14px;
  line-height: 19px;
  color: #fff;
  white-space: nowrap;
}

.note-wide { font-size: 14.8px; }
.note-big { font-size: 17.5px; line-height: 24px; }

.num-note {
  position: absolute;
  font-family: Lato, sans-serif;
  font-size: 31px;
  line-height: 36px;
  color: #ed1c24;
}

.note-1 { left: 89px; top: 83px; }
.note-2 { left: 647px; top: 482px; }
.note-3 { left: 1008px; top: 88px; }
.note-create { left: 58px; top: 130px; }
.note-tri { left: 48px; top: 164px; }
.note-origin { left: 58px; top: 206px; }
.note-scale { left: 577px; top: 530px; }
.note-ctrl { left: 517px; top: 611px; display: flex; gap: 13px; }
.note-names { left: 887px; top: 144px; }
.note-dissable { left: 79px; top: 538px; }
.note-sim { left: 11px; top: 617px; }

/* right screenshot */
.panel-right {
  position: relative;
  display: flex;
  width: 624px;
  height: 717px;
  background: #1d1d1d;
}

.browser {
  width: 461px;
  display: flex;
  flex-direction: column;
  background: #2e2e2e;
}

.fb-strip {
  height: 9px;
  flex: none;
  display: flex;
  gap: 9px;
  padding-left: 16px;
}

.fb-strip span { height: 5px; border-radius: 0 0 3px 3px; }
.strip-a { width: 103px; background: #545454; }
.strip-b { width: 25px; background: #545454; }
.strip-c { width: 291px; background: #1d1d1d; }

.fb-tools {
  display: flex;
  flex: none;
  height: 24px;
  padding-left: 16px;
}

.fb-search { margin: 0 10px 0 0; width: 232px; height: 24px; padding: 5px 0 0 5px; }

.btn-group { display: flex; margin-right: 10px; border-radius: 4px; overflow: hidden; }

.tbtn {
  width: 24px;
  height: 24px;
  margin-right: 1px;
  display: flex;
  align-items: center;
  justify-content: center;
}

.tbtn svg { width: 14px; height: 14px; }
.tbtn-on { background: #4772b3; }
.tbtn-gray { background: #545454; }
.tbtn-drop { width: 26px; margin-right: 0; background: #282828; }
.tbtn-drop .chev { width: 12px; height: 12px; }
.tbtn-solo { margin: 0; border-radius: 4px; }
.tbtn-solo svg { width: 15px; height: 15px; }

.fb-main {
  flex: 1;
  display: flex;
  padding: 9px 0 0 7px;
  min-height: 0;
  overflow: hidden;
}

.file-list {
  position: relative;
  width: 213px;
  background: repeating-linear-gradient(#2a2a2a 0 20px, #282828 20px 40px);
}

.file-head {
  display: flex;
  align-items: center;
  height: 23px;
  padding: 1px 0 0 9px;
  background: #303030;
  border-bottom: 1px solid #222;
}

.col-date { width: 113px; border-right: 1px solid #555; line-height: 15px; }
.col-size { padding-left: 12px; }

.file-row {
  position: relative;
  display: flex;
  align-items: center;
  height: 20px;
  padding-left: 9px;
}

.file-head + .file-row { margin-top: 2px; }

.file-ico { position: absolute; left: 14px; top: 3px; width: 14px; height: 14px; }
.file-size { position: absolute; left: 136px; width: 51px; text-align: right; }

.list-scroll {
  position: absolute;
  right: 3px;
  top: 33px;
  bottom: 15px;
  width: 2px;
  background: #3a3a3a;
}

.fb-options {
  position: relative;
  flex: 1;
  padding: 9px 0 0 0;
  background: #2d2d2d;
}

.preset-row {
  display: flex;
  height: 18px;
  margin-left: 9px;
  width: 221px;
  gap: 1px;
}

.preset {
  flex: 1;
  display: flex;
  align-items: center;
  justify-content: space-between;
  padding: 1px 3px 0 7px;
  background: #282828;
  border: 1px solid #3a3a3a;
  border-radius: 3px 0 0 3px;
}

.pm {
  width: 19px;
  background: #545454;
  font-size: 16px;
  line-height: 17px;
  text-align: center;
  color: #e6e6e6;
}

.pm:last-child { border-radius: 0 3px 3px 0; }

.opt {
  display: flex;
  align-items: center;
  margin-top: 6px;
  height: 19px;
  color: #e0e0e0;
}

.opt-path { margin-top: 18px; }

.opt-label {
  width: 93px;
  margin-right: 10px;
  flex: none;
  text-align: right;
  color: #c2c2c2;
}

.drop {
  width: 127px;
  height: 19px;
  display: flex;
  align-items: center;
  justify-content: space-between;
  padding: 0 1px 0 7px;
  background: #282828;
  border: 1px solid #3a3a3a;
  border-radius: 3px;
}

.drop-wrap { display: flex; width: 127px; gap: 1px; }
.drop-join { flex: 1; width: auto; border-radius: 3px 0 0 3px; }

.drop-btn {
  width: 19px;
  height: 19px;
  display: flex;
  align-items: center;
  justify-content: center;
  background: #3c3c3c;
  border-radius: 0 3px 3px 0;
}

.drop-btn svg { width: 15px; height: 15px; }
.drop-btn-on { background: #4772b3; }

.sub-head {
  display: flex;
  align-items: center;
  height: 24px;
  padding: 1px 0 0 21px;
  gap: 5px;
  background: #303030;
  color: #e0e0e0;
}

.sub-include { margin-top: 9px; }

.chk-row {
  display: flex;
  align-items: center;
  height: 22px;
  padding-top: 1px;
  white-space: nowrap;
}

.chk-limit { margin-top: 7px; }

.box {
  width: 12px;
  height: 12px;
  flex: none;
  margin-right: 4px;
  background: #545454;
  border-radius: 2px;
}

.box-on { background: #4772b3; }
.box svg { width: 12px; height: 12px; }

.opt-types { align-items: flex-start; height: auto; margin-top: 5px; }
.opt-types .opt-label { margin-top: 2px; }

.type-stack {
  width: 127px;
  display: flex;
  flex-direction: column;
  gap: 1px;
  border-radius: 3px;
  overflow: hidden;
}

.type {
  height: 19px;
  line-height: 19px;
  padding-left: 7px;
  background: #4772b3;
  color: #fff;
}

.chk-custom { margin-top: 4px; }

.sub-transform { margin-top: 8px; height: 25px; }

.opt-scale { margin-top: 8px; }

.scale-val {
  width: 127px;
  height: 19px;
  line-height: 18px;
  text-align: center;
  background: #545454;
  border-radius: 3px;
}

.chk-unit { margin-top: 5px; }
.chk-wide { height: 25px; }
.chk-unit { height: 22px; }

.warn { width: 14px; height: 14px; margin-left: auto; margin-right: 7px; }

.sub-closed {
  height: 25px;
  padding-left: 23px;
  background: #2f2f2f;
}

.chk-wide + .sub-closed { margin-top: 7px; }

.r-chev { width: 10px; height: 10px; flex: none; color: #b8b8b8; margin-right: 1px; }

.box-bake { margin: 0 0 0 -1px; }

.opt-scroll {
  position: absolute;
  right: 2px;
  top: 45px;
  bottom: 20px;
  width: 2px;
  background: #3a3a3a;
}

.fb-bottom {
  position: relative;
  flex: none;
  height: 43px;
  display: flex;
  padding: 9px 0 0 16px;
  background: #2e2e2e;
}

.file-name {
  width: 163px;
  height: 24px;
  display: flex;
  align-items: center;
  padding: 1px 6px 0 7px;
  background: #1d1d1d;
  border-radius: 4px;
  margin-right: 10px;
}

.file-name span:first-child { flex: 1; }
.fn-pm { width: 20px; text-align: center; font-size: 15px; }

.act {
  width: 126px;
  height: 24px;
  line-height: 25px;
  text-align: center;
  border-radius: 3px;
  color: #f0f0f0;
}

.act-go { margin-right: 10px; background: #4772b3; }
.act-no { background: #545454; }

.bump {
  position: absolute;
  right: 18px;
  bottom: 0;
  width: 14px;
  height: 6px;
  background: #262626;
  border-radius: 6px 6px 0 0;
}

.bump .chev { width: 8px; height: 8px; transform: rotate(180deg); margin: -2px 0 0 3px; }

.gutter {
  position: relative;
  width: 13px;
  flex: none;
  background: #1d1d1d;
}

.stub {
  position: absolute;
  left: 0;
  width: 7px;
  background: #272727;
  border: 1px solid #333;
  border-left: 0;
  border-radius: 0 4px 4px 0;
}

.stub-a { top: 37px; height: 39px; }
.stub-b { top: 80px; height: 36px; }
.stub-c { top: 120px; height: 36px; }

.side-col-r { width: 150px; gap: 4px; flex: none; }

.outliner-r {
  height: 285px;
  padding-top: 1px;
  background-position: 0 1px;
}

.side-col-r .ol-scene { padding-left: 21px; }
.side-col-r .ol-object { padding-left: 26px; }
.side-col-r .ol-mesh { padding-left: 63px; }
.side-col-r .props { border-radius: 6px 0 0 0; }
.side-col-r .props-main { padding-left: 9px; }
.side-col-r .search-box { margin-left: 74px; }
```
